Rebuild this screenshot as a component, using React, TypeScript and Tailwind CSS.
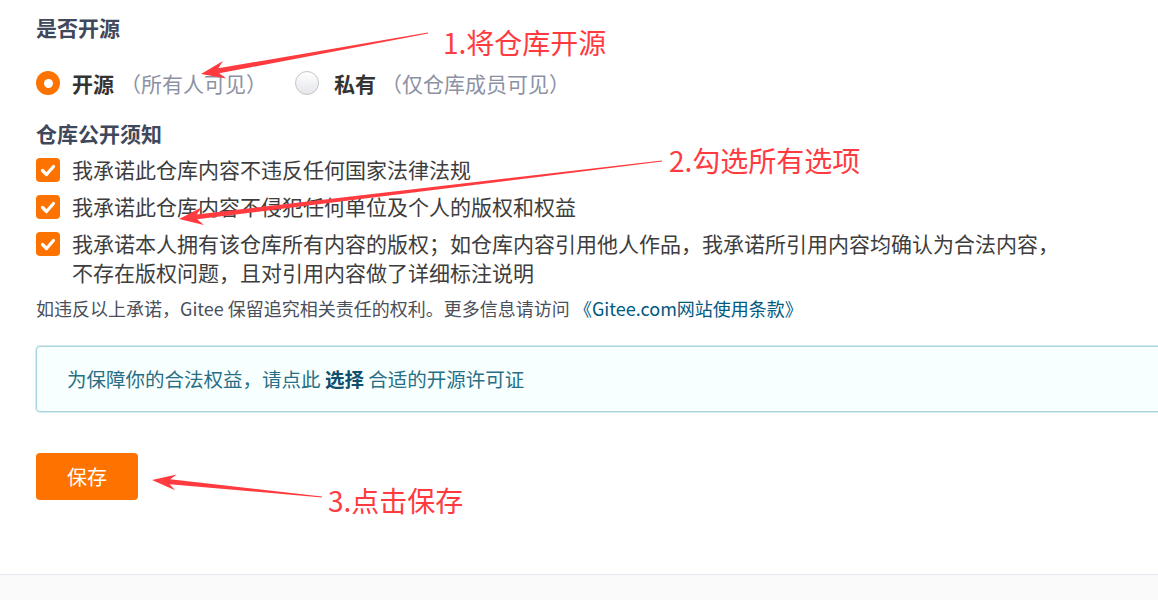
import React from "react";

type P = [number, number];

function arrowPoints(t: P, h: P, w0 = 1, w1 = 5, headLen = 24, headW = 9, sweep = 6): string {
  const dx = h[0] - t[0];
  const dy = h[1] - t[1];
  const len = Math.hypot(dx, dy);
  const ux = dx / len;
  const uy = dy / len;
  const nx = -uy;
  const ny = ux;
  const bx = h[0] - ux * headLen;
  const by = h[1] - uy * headLen;
  const kx = h[0] - ux * (headLen - sweep);
  const ky = h[1] - uy * (headLen - sweep);
  const pts: P[] = [
    [t[0] + (nx * w0) / 2, t[1] + (ny * w0) / 2],
    [kx + (nx * w1) / 2, ky + (ny * w1) / 2],
    [bx + nx * headW, by + ny * headW],
    [h[0], h[1]],
    [bx - nx * headW, by - ny * headW],
    [kx - (nx * w1) / 2, ky - (ny * w1) / 2],
    [t[0] - (nx * w0) / 2, t[1] - (ny * w0) / 2],
  ];
  return pts.map((p) => `${p[0].toFixed(1)},${p[1].toFixed(1)}`).join(" ");
}

function CheckBox() {
  return (
    <span className="flex h-6 w-6 shrink-0 items-center justify-center rounded-[4px] bg-[#fe7300]">
      <svg width="24" height="24" viewBox="0 0 24 24">
        <polyline
          points="6.5,12.5 10.5,16.5 17.5,8.5"
          fill="none"
          stroke="#fff"
          strokeWidth="3.2"
          strokeLinecap="round"
          strokeLinejoin="round"
        />
      </svg>
    </span>
  );
}

function CheckRow({ children }: { children: React.ReactNode }) {
  return (
    <div className="flex items-start gap-3">
      <div className="flex h-[29px] items-center">
        <CheckBox />
      </div>
      <div className="text-[21px] leading-[29px] text-[#3d3d3d]">{children}</div>
    </div>
  );
}

export default function App() {
  return (
    <div className="relative h-[600px] w-[1158px] overflow-hidden bg-white font-['Noto_Sans_CJK_SC',sans-serif]">
      <div className="flex h-[574px] flex-col pl-[36px] pt-[12px]">
        <div className="text-[21px] font-bold leading-[30px] text-[#40485b]">是否开源</div>

        <div className="mt-[26px] flex h-[30px] items-center">
          <span className="flex h-6 w-6 items-center justify-center rounded-full bg-[#fe7300]">
            <span className="h-[9px] w-[9px] rounded-full bg-white" />
          </span>
          <span className="ml-3 text-[21px] font-bold leading-[30px] text-[#333]">开源</span>
          <span className="ml-[6px] text-[21px] leading-[30px] text-[#8c92a4]">（所有人可见）</span>
          <span className="ml-[28px] h-6 w-6 rounded-full border border-[#c4c4c4] bg-linear-to-b from-white to-[#e4e6ea]" />
          <span className="ml-[15px] text-[21px] font-bold leading-[30px] text-[#333]">私有</span>
          <span className="ml-[5px] text-[21px] leading-[30px] text-[#8c92a4]">（仅仓库成员可见）</span>
        </div>

        <div className="mt-[20px] text-[21px] font-bold leading-[30px] text-[#40485b]">仓库公开须知</div>

        <div className="mt-[7px] flex flex-col gap-[8px]">
          <CheckRow>我承诺此仓库内容不违反任何国家法律法规</CheckRow>
          <CheckRow>我承诺此仓库内容不侵犯任何单位及个人的版权和权益</CheckRow>
          <CheckRow>
            我承诺本人拥有该仓库所有内容的版权；如仓库内容引用他人作品，我承诺所引用内容均确认为合法内容，
            <br />
            不存在版权问题，且对引用内容做了详细标注说明
          </CheckRow>
        </div>

        <div className="mt-[8px] text-[18px] leading-[27px] text-[#4a4f5c]">
          如违反以上承诺，Gitee 保留追究相关责任的权利。更多信息请访问{" "}
          <span className="text-[#005980]">《Gitee.com网站使用条款》</span>
        </div>

        <div className="mt-[24px] flex h-[66px] w-[1200px] shrink-0 items-center rounded-[4px] border border-[#a9d5de] bg-[#f8ffff] pl-[30px] shadow-[0_0_0_1px_#d6ecf0]">
          <span className="text-[19.5px] leading-[28px] text-[#276f86]">
            为保障你的合法权益，请点此 <span className="font-bold text-[#0e4f6e]">选择</span> 合适的开源许可证
          </span>
        </div>

        <div className="mt-[41px] flex h-[47px] w-[102px] items-center justify-center rounded-[4px] bg-[#fe7300] text-[20px] leading-[28px] text-white">
          保存
        </div>
      </div>
      <div className="h-[26px] border-t border-[#e3e8ee] bg-[#fafafa]" />

      <svg className="pointer-events-none absolute left-0 top-0" width="1158" height="600" viewBox="0 0 1158 600">
        <polygon points={arrowPoints([428, 33], [201, 74], 1, 5, 24, 9, 6)} fill="#ff3b3f" />
        <polygon points={arrowPoints([662, 161], [179, 219], 1, 5, 24, 9, 6)} fill="#ff3b3f" />
        <polygon points={arrowPoints([322, 497], [152, 480], 1, 5, 24, 8, 6)} fill="#ff3b3f" />
      </svg>

      <div className="absolute left-[443px] top-[24px] text-[28px] leading-[36px] text-[#ff3b3f]">1.将仓库开源</div>
      <div className="absolute left-[669px] top-[142px] text-[28px] leading-[36px] text-[#ff3b3f]">2.勾选所有选项</div>
      <div className="absolute left-[328px] top-[482px] text-[28px] leading-[36px] text-[#ff3b3f]">3.点击保存</div>
    </div>
  );
}
